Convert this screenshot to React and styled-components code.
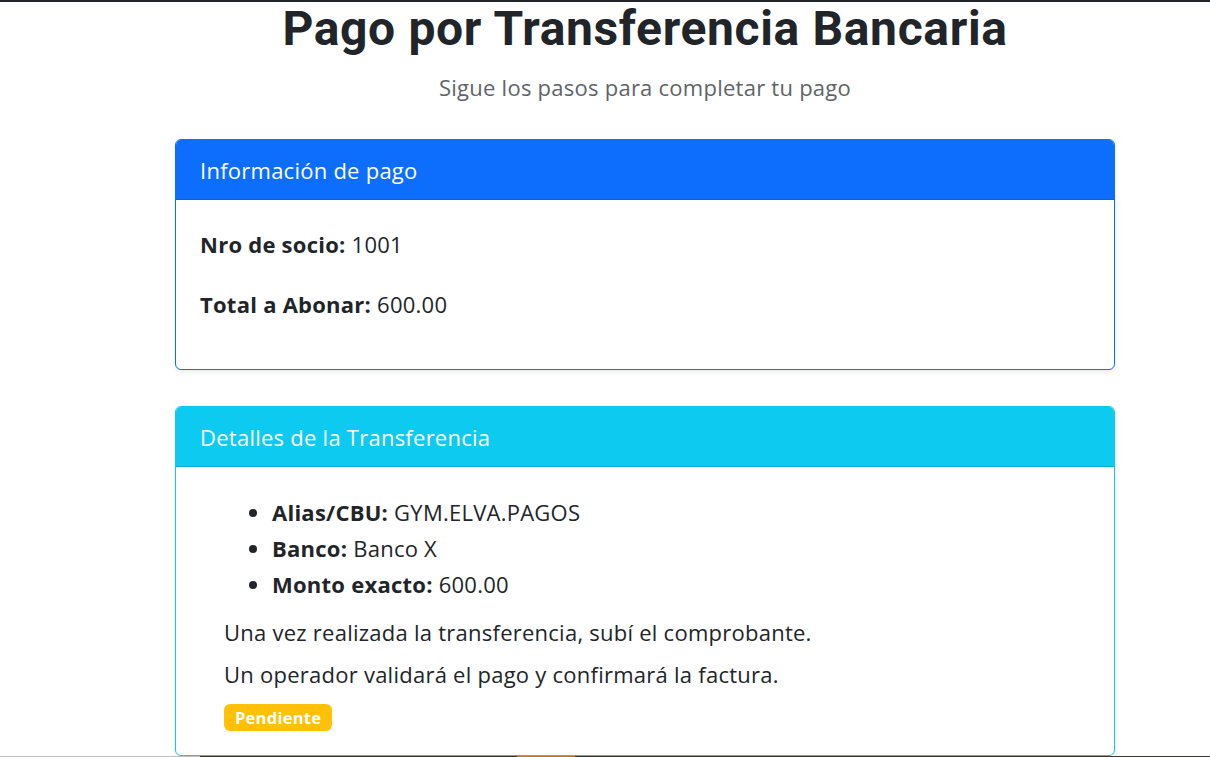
import React from 'react';
import styled, { createGlobalStyle } from 'styled-components';

const GlobalStyle = createGlobalStyle`
  html, body {
    margin: 0;
    padding: 0;
    background: #fff;
  }
  body {
    font-family: "Open Sans", "Noto Sans", "Liberation Sans", sans-serif;
    color: #212529;
    letter-spacing: 0.25px;
  }
  * {
    box-sizing: border-box;
  }
`;

// datos de pago
const socio = { nro: '1001', total: '600.00' };
const transferencia = [
  { label: 'Alias/CBU:', value: 'GYM.ELVA.PAGOS' },
  { label: 'Banco:', value: 'Banco X' },
  { label: 'Monto exacto:', value: socio.total },
];

const App = () => {
  return (
    <>
      <GlobalStyle />
      <TopEdge />
      <Page>
        <Title>Pago por Transferencia Bancaria</Title>
        <Subtitle>Sigue los pasos para completar tu pago</Subtitle>

        <Card $color="#0d6efd" $gap="37px">
          <CardHeader $color="#0d6efd">Información de pago</CardHeader>
          <InfoBody>
            <InfoRow><strong>Nro de socio:</strong> {socio.nro}</InfoRow>
            <InfoRow><strong>Total a Abonar:</strong> {socio.total}</InfoRow>
          </InfoBody>
        </Card>

        <Card $color="#0dcaf0" $gap="36px">
          <CardHeader $color="#0dcaf0">Detalles de la Transferencia</CardHeader>
          <DetailBody>
            <DetailList>
              {transferencia.map((item) => (
                <li key={item.label}>
                  <strong>{item.label}</strong> {item.value}
                </li>
              ))}
            </DetailList>
            <Note>Una vez realizada la transferencia, subí el comprobante.</Note>
            <Note>Un operador validará el pago y confirmará la factura.</Note>
            <Badge>Pendiente</Badge>
          </DetailBody>
        </Card>
      </Page>
      <BottomEdge />
    </>
  );
};

export default App;

const Page = styled.main`
  width: 940px;
  margin-left: 175px;
  display: flex;
  flex-direction: column;
`;

const Title = styled.h1`
  margin: 0;
  font-family: Roboto, "Open Sans", sans-serif;
  font-size: 48px;
  line-height: 57px;
  font-weight: 700;
  letter-spacing: 0.65px;
  text-align: center;
  color: #212529;
`;

const Subtitle = styled.p`
  margin: 15px 0 0;
  font-size: 22px;
  line-height: 30px;
  text-align: center;
  color: #5f6468;
`;

const Card = styled.section`
  margin-top: ${(p) => p.$gap};
  border: 1px solid ${(p) => p.$color};
  border-radius: 6px;
  overflow: hidden;
  background: #fff;
  box-shadow: 0 2px 4px rgba(0, 0, 0, 0.075);
`;

const CardHeader = styled.div`
  background: ${(p) => p.$color};
  color: #fff;
  font-size: 22px;
  line-height: 30px;
  padding: 15px 24px 14px;
  border-bottom: 1px solid rgba(0, 0, 0, 0.12);
`;

const InfoBody = styled.div`
  padding: 29px 24px 20px;
`;

const InfoRow = styled.p`
  margin: 0 0 30px;
  font-size: 22px;
  line-height: 30px;
`;

const DetailBody = styled.div`
  display: flex;
  flex-direction: column;
  padding: 27px 24px 24px 48px;
  font-size: 22px;
`;

const DetailList = styled.ul`
  margin: 0 0 15px;
  padding-left: 48px;
  line-height: 36px;
`;

const Note = styled.p`
  margin: 0 0 12px;
  line-height: 30px;
`;

const Badge = styled.span`
  align-self: flex-start;
  display: flex;
  align-items: center;
  height: 27px;
  margin-top: 3px;
  padding: 0 11px;
  font-size: 16.5px;
  font-weight: 700;
  color: #fff;
  background: #ffc107;
  border-radius: 6px;
`;

const TopEdge = styled.div`
  position: fixed;
  top: 0;
  left: 0;
  right: 0;
  height: 2px;
  background: #212529;
`;

const BottomEdge = styled.div`
  position: fixed;
  left: 0;
  right: 0;
  bottom: 0;
  height: 1px;
  background: linear-gradient(
    to right,
    #c0c0c0 0,
    #c0c0c0 200px,
    #3a3330 200px,
    #3a3330 517px,
    #c8761e 517px,
    #c8761e 575px,
    #3a3330 575px
  );
`;
